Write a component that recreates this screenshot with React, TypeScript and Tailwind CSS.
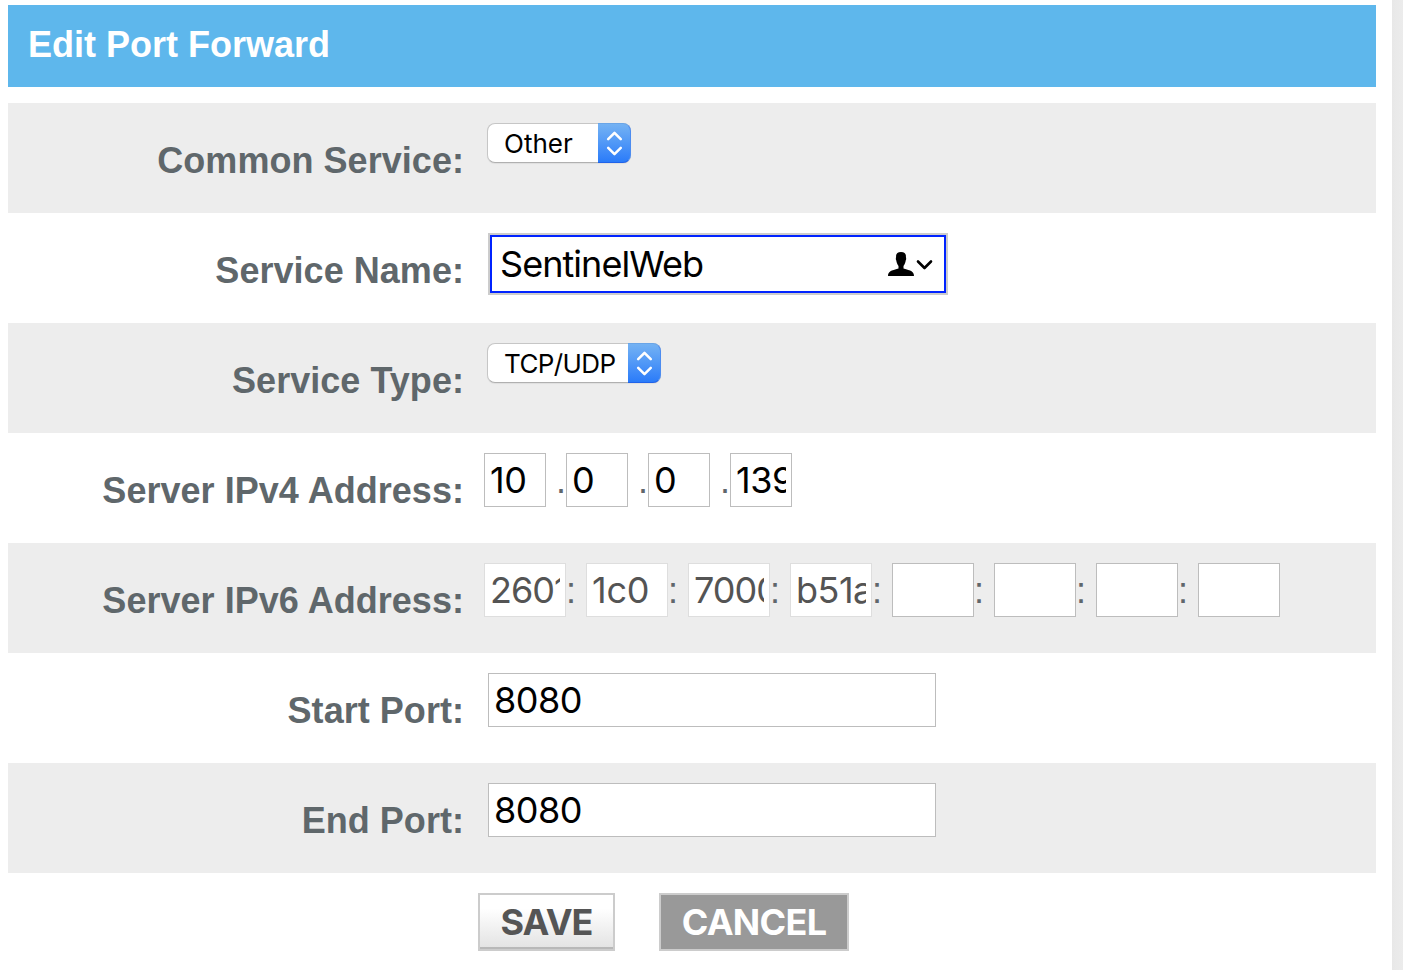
import type { ReactNode } from "react";

function Row({ label, shaded, children }: { label: string; shaded?: boolean; children: ReactNode }) {
  return (
    <div className={`flex h-[110px] items-start ${shaded ? "bg-[#ededed]" : "bg-white"}`}>
      <label className="mr-[2px] w-[456px] shrink-0 pt-[37px] text-right text-[36px] leading-[41px] font-bold tracking-[0.04px] whitespace-nowrap text-[#5f676b]">
        {label}
      </label>
      {children}
    </div>
  );
}

function MacSelect({ value, width, spacing }: { value: string; width: string; spacing: string }) {
  return (
    <div
      className={`mt-5 ml-[21px] flex h-10 rounded-[8px] border border-[#c6c6c6] border-b-[#b0b0b0] bg-white shadow-[0_1px_1px_rgba(0,0,0,0.06)] ${width}`}
    >
      <span className={`flex-1 pl-4 font-[Inter] text-[26px] leading-[40px] whitespace-nowrap text-black ${spacing}`}>
        {value}
      </span>
      <span className="-my-px -mr-px flex w-[33px] shrink-0 items-center justify-center rounded-r-[8px] border-y border-r border-t-[#69a5e8] border-r-[#4c8cf0] border-b-[#2063ea] bg-linear-to-b from-[#74b2f3] to-[#2a7bf9]">
        <svg width="33" height="38" viewBox="0 0 33 38" fill="none" stroke="white" strokeWidth="2.6" strokeLinecap="round" strokeLinejoin="round">
          <path d="M10.5 15 L17 8.5 L23.5 15 M10.5 24 L17 30.5 L23.5 24" />
        </svg>
      </span>
    </div>
  );
}

function Field({ value, box, text = "text-black" }: { value: string; box: string; text?: string }) {
  return (
    <div className={`mt-5 h-[54px] shrink-0 border bg-white px-[5px] ${box}`}>
      <div className={`h-full overflow-hidden font-[Inter] text-[36px] leading-[53px] whitespace-nowrap ${text}`}>{value}</div>
    </div>
  );
}

const ipv4 = [
  { value: "10", spacing: "tracking-[-0.5px]" },
  { value: "0", spacing: "" },
  { value: "0", spacing: "" },
  { value: "139", spacing: "tracking-[-0.5px]" },
];
const ipv6 = [
  { value: "2601", spacing: "tracking-[-1px]" },
  { value: "1c0", spacing: "tracking-[-0.2px]" },
  { value: "7000", spacing: "tracking-[-1px]" },
  { value: "b51a", spacing: "tracking-[-0.5px]" },
  { value: "", spacing: "" },
  { value: "", spacing: "" },
  { value: "", spacing: "" },
  { value: "", spacing: "" },
];

export default function App() {
  return (
    <div className="flex h-[970px] w-[1403px] overflow-hidden bg-white font-['Liberation_Sans',Arial,sans-serif]">
      <main className="mr-4 ml-2 w-[1368px] pt-[5px]">
        <h1 className="mb-4 h-[82px] bg-[#5eb7ec] pt-[19px] pl-5 text-[36px] leading-[41px] font-bold text-white">
          Edit Port Forward
        </h1>

        <Row label="Common Service:" shaded>
          <MacSelect value="Other" width="w-[144px]" spacing="tracking-[0px]" />
        </Row>

        <Row label="Service Name:">
          <div className="mt-5 ml-[22px] h-[62px] w-[460px] border-2 border-[#cccccc]">
            <div className="flex h-full items-center border-2 border-[#0023ff] pr-[11px] pl-2">
              <span className="flex-1 font-[Inter] text-[36px] leading-[54px] tracking-[-0.95px] text-black">SentinelWeb</span>
              <svg width="46" height="26" viewBox="0 0 46 26" fill="none">
                <path
                  d="M1 25 C1 20.5 4 19.5 11.5 17.5 V15 C10 13 9.5 11 9.3 9.5 C8.6 8.5 8.8 7 9.1 6 C8.8 2.5 10.5 1 14 1 C17.5 1 19.2 2.5 18.9 6 C19.2 7 19.4 8.5 18.7 9.5 C18.5 11 18 13 16.5 15 V17.5 C24 19.5 27 20.5 27 25 Z"
                  fill="black"
                />
                <path d="M31 10.5 L37.5 17 L44 10.5" stroke="black" strokeWidth="2.6" strokeLinecap="round" strokeLinejoin="round" />
              </svg>
            </div>
          </div>
        </Row>

        <Row label="Service Type:" shaded>
          <MacSelect value="TCP/UDP" width="w-[174px]" spacing="tracking-[-0.6px]" />
        </Row>

        <Row label="Server IPv4 Address:">
          <div className="ml-[18px] flex">
            {ipv4.map((part, i) => (
              <div key={i} className="flex">
                {i > 0 && <span className="w-5 pt-[27px] pl-[10px] text-[36px] leading-[41px] text-[#5f676b]">.</span>}
                <Field value={part.value} box="w-[62px] border-[#bdbdbd]" text={`text-black ${part.spacing}`} />
              </div>
            ))}
          </div>
        </Row>

        <Row label="Server IPv6 Address:" shaded>
          <div className="ml-[18px] flex">
            {ipv6.map((part, i) => (
              <div key={i} className="flex">
                {i > 0 && <span className="w-5 pt-[27px] text-[36px] leading-[41px] text-[#5f676b]">:</span>}
                <Field
                  value={part.value}
                  box={part.value ? "w-[82px] border-[#dedede]" : "w-[82px] border-[#bdbdbd]"}
                  text={`text-[#545454] ${part.spacing}`}
                />
              </div>
            ))}
          </div>
        </Row>

        <Row label="Start Port:">
          <Field value="8080" box="ml-[22px] w-[448px] border-[#bdbdbd]" text="text-black tracking-[-0.5px]" />
        </Row>

        <Row label="End Port:" shaded>
          <Field value="8080" box="ml-[22px] w-[448px] border-[#bdbdbd]" text="text-black tracking-[-0.5px]" />
        </Row>

        <div className="flex gap-11 pt-5 pl-[470px] font-[Inter] text-[36px] leading-[54px] font-bold">
          <button className="h-[58px] w-[137px] border-2 border-[#cccccc] bg-linear-to-b from-white from-25% to-[#e2e2e2] tracking-[-1px] text-[#555555] shadow-[inset_0_-2px_0_#b8b8b8]">
            SAVE
          </button>
          <button className="h-[58px] w-[190px] border-2 border-[#cccccc] bg-[#999999] tracking-[-0.7px] text-white">
            CANCEL
          </button>
        </div>
      </main>
      <div className="flex-1 bg-linear-to-r from-[#e8e8e8] to-[#ececec]" />
    </div>
  );
}
